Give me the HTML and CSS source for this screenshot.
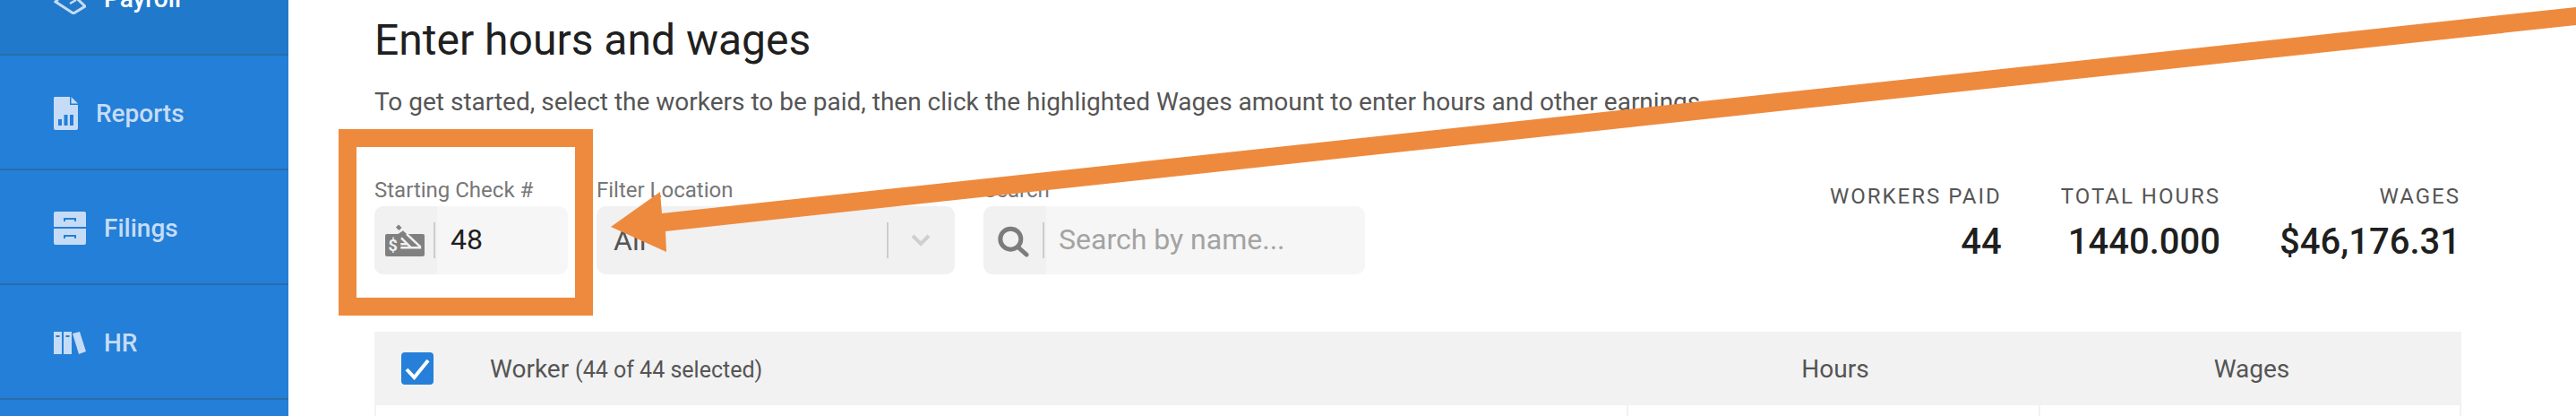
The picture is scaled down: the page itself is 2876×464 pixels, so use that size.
FILE: index.html
```html
<!DOCTYPE html>
<html lang="en">
<head>
    <meta charset="UTF-8">
    <meta name="viewport" content="width=device-width, initial-scale=1.0">
    <title>Enter hours and wages</title>
    <link rel="stylesheet" href="styles.css">
</head>
<body>
<aside class="sidebar">
    <a class="nav-item nav-active">
        <svg class="nav-icon" width="36" height="36" viewBox="0 0 36 36"><path d="M15 8 L35 27 L22 35 L2 22 Z" fill="none" stroke="#c6dcf6" stroke-width="3"/><path d="M13 19 L19 15 M18 24 L25 20" stroke="#c6dcf6" stroke-width="2.5"/></svg>
        <span>Payroll</span>
    </a>
    <a class="nav-item">
        <svg class="nav-icon" width="27" height="37" viewBox="0 0 27 37"><path d="M1 0 H18 V9 H27 V35 a2 2 0 0 1 -2 2 H2 a2 2 0 0 1 -2 -2 V1 Z" fill="#c6dcf6"/><path d="M19.500 0 L27 7.500 H19.500 Z" fill="#c6dcf6"/><path d="M5 25 h4 v7 h-4 Z M11.500 20 h4 v12 h-4 Z M18 20 h4 v12 h-4 Z" fill="#237fd7"/></svg>
        <span>Reports</span>
    </a>
    <a class="nav-item">
        <svg class="nav-icon" width="36" height="37" viewBox="0 0 36 37"><path d="M2 0 H34 a2 2 0 0 1 2 2 V17 H0 V2 a2 2 0 0 1 2 -2 Z M0 19 H36 V35 a2 2 0 0 1 -2 2 H2 a2 2 0 0 1 -2 -2 Z" fill="#c6dcf6"/><path d="M12 11 V8 H24 V11 M12 30 V27 H24 V30" fill="none" stroke="#237fd7" stroke-width="2"/></svg>
        <span>Filings</span>
    </a>
    <a class="nav-item">
        <svg class="nav-icon" width="36" height="25" viewBox="0 0 36 25"><path d="M0 0 H9 V25 H0 Z M11 0 H20 V25 H11 Z M21 2 L29 0 L36 22 L28 25 Z" fill="#c6dcf6"/><path d="M2.500 5 h4 M13.500 5 h4" stroke="#237fd7" stroke-width="2"/></svg>
        <span>HR</span>
    </a>
</aside>

<main class="content">
    <h1>Enter hours and wages</h1>
    <p class="intro">To get started, select the workers to be paid, then click the highlighted Wages amount to enter hours and other earnings.</p>

    <div class="toolbar">
        <div class="field field-check">
            <label>Starting Check #</label>
            <div class="control">
                <div class="addon">
                    <svg width="44" height="38" viewBox="0 0 44 38"><rect x="0" y="12" width="44" height="25" rx="2" fill="#808080"/><path d="M12 4.500 L15 1.500 L18.500 5 L15.500 8 Z" fill="#808080"/><path d="M20 8.300 L39 25.700 V27.300 H29 L14 12.300 Z" fill="#808080"/><path d="M24 12 L39 26 V27.300 H29 L18 16.300 M17.300 23.300 H25.700 M17.300 27.300 H29" fill="none" stroke="#f1f1f1" stroke-width="2.400"/><text x="3.500" y="30.500" class="check-dollar">$</text></svg>
                    <span class="addon-sep"></span>
                </div>
                <input class="text-input check-input" type="text" value="48">
            </div>
        </div>
        <div class="field field-location">
            <label>Filter Location</label>
            <div class="select">
                <span class="select-value">All</span>
                <span class="select-sep"></span>
                <svg class="chevron" width="24" height="16" viewBox="0 0 24 16"><path d="M3 3 L12 12 L21 3" fill="none" stroke="#cfcfcf" stroke-width="4"/></svg>
            </div>
        </div>
        <div class="field field-search">
            <label>Search</label>
            <div class="control">
                <div class="addon">
                    <svg width="40" height="38" viewBox="0 0 40 38"><circle cx="18.300" cy="17.700" r="11.500" fill="none" stroke="#7c7c7c" stroke-width="5"/><path d="M27 27 L36 35" stroke="#7c7c7c" stroke-width="5" stroke-linecap="round"/></svg>
                    <span class="addon-sep"></span>
                </div>
                <input class="text-input" type="text" placeholder="Search by name...">
            </div>
        </div>

        <div class="stats">
            <div class="stat">
                <div class="stat-label">WORKERS PAID</div>
                <div class="stat-value">44</div>
            </div>
            <div class="stat">
                <div class="stat-label">TOTAL HOURS</div>
                <div class="stat-value">1440.000</div>
            </div>
            <div class="stat">
                <div class="stat-label">WAGES</div>
                <div class="stat-value">$46,176.31</div>
            </div>
        </div>
    </div>

    <div class="table">
        <div class="table-head">
            <div class="col-check"><span class="checkbox"><svg width="36" height="36" viewBox="0 0 36 36"><path d="M6 19 L14.500 28 L30 9" fill="none" stroke="#fff" stroke-width="4"/></svg></span></div>
            <div class="col-worker">Worker <small>(44 of 44 selected)</small></div>
            <div class="col-hours">Hours</div>
            <div class="col-wages">Wages</div>
        </div>
        <div class="table-row">
            <div class="cell-main"></div>
            <div class="cell-hours"></div>
            <div class="cell-wages"></div>
        </div>
    </div>
</main>

<!-- callout drawn over the page -->
<div class="callout-box"></div>
<svg class="callout-arrow" width="2876" height="464" viewBox="0 0 2876 464"><path d="M2876 8 L739 238 L737 214 L682 253 L744 281 L743 258 L2876 28 Z" fill="#ee8a3e"/></svg>
</body>
</html>
```

FILE: styles.css
```css
* {
    margin: 0;
    padding: 0;
    box-sizing: border-box;
}

body {
    font-family: Roboto, Arial, sans-serif;
    background-color: #ffffff;
    display: flex;
    height: 100vh;
    overflow: hidden;
    position: relative;
}

/* sidebar */
.sidebar {
    width: 322px;
    flex-shrink: 0;
    background-color: #237fd7;
    margin-top: -66px;
}

.nav-item {
    display: flex;
    align-items: center;
    height: 128px;
    padding-left: 60px;
    padding-top: 2px;
    gap: 20px;
    border-bottom: 2px solid #2a6dab;
    color: #c6dcf6;
    font-size: 28px;
    font-weight: 500;
}

.nav-active {
    background-color: #2079cb;
    color: #ffffff;
}

/* main area */
.content {
    flex: 1;
    padding: 17px 128px 0 96px;
}

h1 {
    font-size: 48px;
    font-weight: 400;
    line-height: 56px;
    color: #1f1f1f;
}

.intro {
    font-size: 28px;
    line-height: 32px;
    margin-top: 25px;
    color: #555555;
}

.toolbar {
    display: flex;
    gap: 32px;
    margin-top: 68px;
}

label {
    display: block;
    font-size: 24px;
    line-height: 28px;
    margin-bottom: 4px;
    color: #777777;
}

.field-check {
    width: 216px;
}

.field-location {
    width: 400px;
}

.field-search {
    width: 426px;
}

.control,
.select {
    display: flex;
    height: 76px;
    border-radius: 10px;
    overflow: hidden;
    background-color: #f6f6f6;
}

.addon {
    display: flex;
    align-items: center;
    width: 70px;
    flex-shrink: 0;
    padding-left: 12px;
    background-color: #f1f1f1;
}

.addon-sep {
    width: 2px;
    height: 40px;
    margin-left: auto;
    margin-right: 2px;
    background-color: #cccccc;
}

.check-dollar {
    font-family: Roboto, Arial, sans-serif;
    font-size: 18px;
    font-weight: 700;
    fill: #f1f1f1;
}

.text-input {
    flex: 1;
    min-width: 0;
    border: none;
    outline: none;
    background: none;
    padding-left: 14px;
    padding-bottom: 2px;
    font-family: Roboto, Arial, sans-serif;
    font-size: 32px;
    color: #1f1f1f;
}

.text-input::placeholder {
    color: #a3a3a3;
}

.check-input {
    padding-left: 15px;
}

.select {
    align-items: center;
    background-color: #f1f1f1;
    padding-left: 19px;
}

.select-value {
    flex: 1;
    font-size: 32px;
    color: #555555;
}

.select-sep {
    width: 2px;
    height: 40px;
    background-color: #cccccc;
}

.chevron {
    margin: 0 26px 0 24px;
}

/* totals */
.stats {
    display: flex;
    gap: 66px;
    margin-left: auto;
    padding-right: 1px;
}

.stat {
    text-align: right;
}

.stat-label {
    font-size: 24px;
    line-height: 28px;
    margin-top: 7px;
    letter-spacing: 2px;
    color: #555555;
}

.stat-value {
    font-size: 40px;
    font-weight: 500;
    line-height: 44px;
    margin-top: 15px;
    color: #1f1f1f;
}

/* table */
.table {
    margin-top: 64px;
}

.table-head {
    display: flex;
    align-items: center;
    height: 82px;
    background-color: #f2f2f2;
    font-size: 28px;
    color: #555555;
}

.table-head small {
    font-size: 25px;
}

.col-check {
    width: 129px;
    padding-left: 30px;
    display: flex;
}

.checkbox {
    display: block;
    width: 36px;
    height: 36px;
    border-radius: 4px;
    background-color: #2680d9;
}

.col-worker {
    width: 1271px;
}

.col-hours {
    width: 462px;
    text-align: center;
}

.col-wages {
    width: 468px;
    text-align: center;
}

.table-row {
    display: flex;
    height: 12px;
    border-left: 2px solid #f2f2f2;
    border-right: 2px solid #f2f2f2;
}

.cell-main {
    width: 1396px;
}

.cell-hours {
    width: 462px;
    border-left: 2px solid #f2f2f2;
    border-right: 2px solid #f2f2f2;
}

/* orange callout over the page */
.callout-box {
    position: absolute;
    left: 378px;
    top: 144px;
    width: 284px;
    height: 208px;
    border: 20px solid #ee8a3e;
}

.callout-arrow {
    position: absolute;
    left: 0;
    top: 0;
}
```
